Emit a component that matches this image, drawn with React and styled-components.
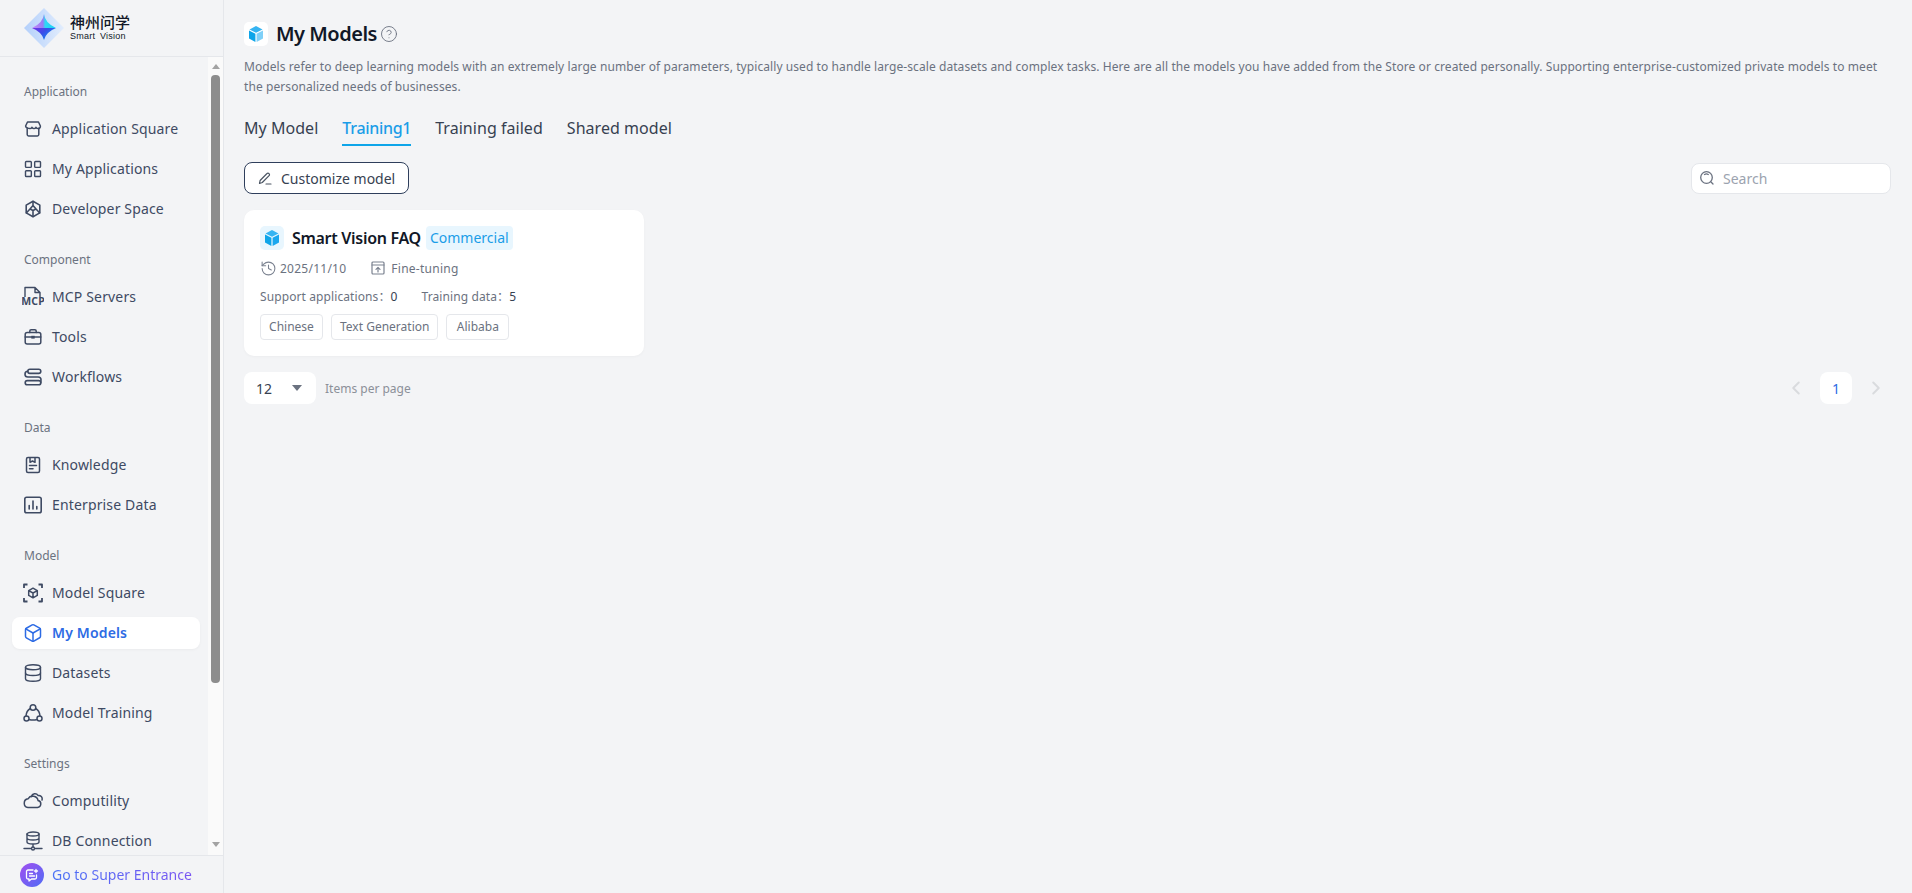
import styled, { createGlobalStyle } from "styled-components";
import { LayoutGrid, Box, Database, CircleHelp, ChevronLeft, ChevronRight, History } from "lucide-react";

const GlobalStyle = createGlobalStyle`
  html, body {
    margin: 0;
    height: 100%;
    background: #f3f4f6;
    font-family: "Noto Sans", "Noto Sans CJK SC", sans-serif;
    color: #374151;
    overflow: hidden;
  }
  * { box-sizing: border-box; }
`;

const Shell = styled.div`
  display: flex;
  height: 100vh;
`;
const Sidebar = styled.aside`
  width: 224px;
  flex: none;
  display: flex;
  flex-direction: column;
  border-right: 1px solid #e5e7eb;
`;
const LogoBar = styled.div`
  height: 57px;
  flex: none;
  display: flex;
  align-items: center;
  gap: 6px;
  padding-left: 24px;
  border-bottom: 1px solid #e5e7eb;
`;
const LogoText = styled.div`
  display: flex;
  flex-direction: column;
  color: #111827;
`;
const LogoCn = styled.span`
  font-size: 15px;
  line-height: 17px;
  font-weight: 500;
`;
const LogoEn = styled.span`
  font-size: 9px;
  line-height: 11px;
  font-family: "Liberation Sans", sans-serif;
  word-spacing: 2px;
  letter-spacing: 0.25px;
`;
const NavArea = styled.div`
  flex: 1;
  min-height: 0;
  display: flex;
`;
const NavScroll = styled.nav`
  flex: 1;
  min-width: 0;
  overflow: hidden;
  padding: 25px 8px 0 12px;
`;
const ScrollTrack = styled.div`
  width: 15px;
  flex: none;
  display: flex;
  flex-direction: column;
  align-items: center;
  padding: 7px 0 8px;
  background: #fafafa;
`;
const ScrollArrow = styled.span`
  width: 0;
  height: 0;
  border-left: 4.5px solid transparent;
  border-right: 4.5px solid transparent;
  ${(p) => (p.$down ? "border-top: 5px solid #a3a3a3; margin-top: auto;" : "border-bottom: 5px solid #a3a3a3;")}
`;
const ScrollThumb = styled.div`
  width: 9px;
  height: 608px;
  margin-top: 6px;
  border-radius: 4px;
  background: #8d8d8d;
`;
const NavGroup = styled.div`
  display: flex;
  flex-direction: column;
  gap: 8px;
  margin-bottom: 25px;
`;
const GroupLabel = styled.div`
  font-size: 12px;
  line-height: 20px;
  color: #6b7280;
  padding-left: 12px;
  margin-bottom: 3px;
`;
const NavItem = styled.div`
  height: 32px;
  display: flex;
  align-items: center;
  gap: 10px;
  padding: 0 0 2px 12px;
  border-radius: 8px;
  font-size: 14px;
  letter-spacing: 0.15px;
  font-weight: ${(p) => (p.$active ? 600 : 400)};
  color: ${(p) => (p.$active ? "#2d6be4" : "#3e4a63")};
  background: ${(p) => (p.$active ? "#fff" : "transparent")};
  box-shadow: ${(p) => (p.$active ? "0 1px 3px rgba(0,0,0,0.04)" : "none")};
`;
const NavIcon = styled.span`
  width: 18px;
  height: 18px;
  margin-top: 2px;
  flex: none;
  display: flex;
  align-items: center;
  justify-content: center;
  svg { flex: none; }
`;
const SuperEntrance = styled.div`
  height: 38px;
  flex: none;
  display: flex;
  align-items: center;
  gap: 8px;
  padding-left: 20px;
  border-top: 1px solid #e5e7eb;
`;
const SuperIcon = styled.span`
  width: 24px;
  height: 24px;
  border-radius: 50%;
  display: flex;
  align-items: center;
  justify-content: center;
  background: linear-gradient(135deg, #a24ff0, #4f6cf5);
`;
const SuperText = styled.span`
  font-size: 14px;
  background: linear-gradient(90deg, #4a72f5, #7a55f2);
  -webkit-background-clip: text;
  background-clip: text;
  color: transparent;
`;
const Main = styled.main`
  flex: 1;
  min-width: 0;
  padding: 22px 21px 0 20px;
`;
const TitleRow = styled.div`
  display: flex;
  align-items: center;
  height: 24px;
`;
const IconTile = styled.span`
  width: 24px;
  height: 24px;
  flex: none;
  border-radius: 5px;
  display: flex;
  align-items: center;
  justify-content: center;
  background: ${(p) => p.$bg};
`;
const PageTitle = styled.h1`
  margin: 0 3px 0 8px;
  font-size: 20px;
  line-height: 24px;
  font-weight: 600;
  letter-spacing: -0.5px;
  color: #111827;
`;
const Description = styled.p`
  margin: 11px 0 0;
  font-size: 12px;
  line-height: 20px;
  letter-spacing: 0.08px;
  color: #6b7280;
`;
const Tabs = styled.div`
  display: flex;
  gap: 24px;
  margin-top: 15px;
`;
const Tab = styled.div`
  height: 34px;
  font-size: 16px;
  line-height: 32px;
  font-weight: ${(p) => (p.$active ? 500 : 400)};
  letter-spacing: ${(p) => (p.$active ? "-0.3px" : "0.04px")};
  color: ${(p) => (p.$active ? "#1b9de8" : "#374151")};
  border-bottom: 2px solid ${(p) => (p.$active ? "#0ea5e9" : "transparent")};
`;
const Toolbar = styled.div`
  display: flex;
  align-items: center;
  justify-content: space-between;
  margin-top: 16px;
`;
const OutlineButton = styled.button`
  height: 32px;
  width: 165px;
  display: flex;
  align-items: center;
  gap: 9px;
  padding: 0 0 0 13px;
  background: #fff;
  border: 1px solid #2f3f5c;
  border-radius: 8px;
  font: inherit;
  font-size: 14px;
  color: #374151;
`;
const SearchBox = styled.div`
  width: 200px;
  height: 31px;
  display: flex;
  align-items: center;
  gap: 8px;
  padding-left: 7px;
  background: #fff;
  border: 1px solid #e5e7eb;
  border-radius: 8px;
  font-size: 14px;
  color: #9ca3af;
`;
const Card = styled.section`
  width: 400px;
  height: 146px;
  margin-top: 16px;
  padding: 16px;
  background: #fff;
  border-radius: 10px;
  box-shadow: 0 1px 3px rgba(0, 0, 0, 0.03);
`;
const CardHead = styled.div`
  display: flex;
  align-items: center;
  height: 24px;
`;
const CardTitle = styled.span`
  margin: 0 5px 0 8px;
  font-size: 16px;
  font-weight: 600;
  letter-spacing: -0.3px;
  color: #111827;
`;
const Badge = styled.span`
  height: 24px;
  padding: 0 4px;
  border-radius: 4px;
  background: #e8f6fe;
  color: #1b9de8;
  font-size: 14px;
  line-height: 24px;
`;
const MetaRow = styled.div`
  display: flex;
  align-items: center;
  margin-top: 8px;
  height: 20px;
  font-size: 12px;
  color: #6b7280;
`;
const MetaItem = styled.span`
  display: flex;
  align-items: center;
  gap: ${(p) => p.$gap}px;
  margin-right: 24px;
  letter-spacing: 0.25px;
`;
const StatsRow = styled.div`
  display: flex;
  gap: 24px;
  margin-top: 9px;
  height: 20px;
  font-size: 12px;
  line-height: 20px;
  letter-spacing: 0.1px;
  color: #6b7280;
`;
const StatValue = styled.span`
  color: #374151;
`;
const TagRow = styled.div`
  display: flex;
  gap: 8px;
  margin-top: 7px;
`;
const Tag = styled.span`
  height: 26px;
  min-width: 63px;
  padding: 0 8px;
  border: 1px solid #e5e7eb;
  border-radius: 4px;
  font-size: 12px;
  line-height: 24px;
  text-align: center;
  color: #6b7280;
`;
const Pagination = styled.div`
  display: flex;
  align-items: center;
  margin-top: 16px;
`;
const PageSize = styled.div`
  width: 72px;
  height: 32px;
  display: flex;
  align-items: center;
  justify-content: space-between;
  padding: 0 14px 0 12px;
  background: #fff;
  border-radius: 8px;
  font-size: 14px;
  color: #374151;
`;
const Caret = styled.span`
  width: 0;
  height: 0;
  border-left: 5px solid transparent;
  border-right: 5px solid transparent;
  border-top: 6px solid #6b7280;
`;
const PageSizeLabel = styled.span`
  margin-left: 9px;
  font-size: 12px;
  color: #8b9099;
`;
const Pager = styled.div`
  margin-left: auto;
  display: flex;
  align-items: center;
  gap: 13px;
  margin-right: 4px;
  color: #d9dbde;
`;
const PageNumber = styled.span`
  width: 32px;
  height: 32px;
  display: flex;
  align-items: center;
  justify-content: center;
  background: #fff;
  border-radius: 8px;
  font-size: 14px;
  color: #2d6be4;
`;

const Line = ({ size = 18, sw = 1.5, children }) => (
  <svg width={size} height={size} viewBox="0 0 18 18" fill="none" stroke="currentColor" strokeWidth={sw} strokeLinecap="round" strokeLinejoin="round">
    {children}
  </svg>
);

const StoreIcon = () => (
  <Line>
    <path d="M3.2 8.2v6.3c0 .8.6 1.4 1.4 1.4h8.8c.8 0 1.4-.6 1.4-1.4V8.2" />
    <path d="M3.5 2h11l1.9 4c.2 1.5-1 2.6-2.3 2.6-1 0-1.7-.5-2.1-1.4-.4.9-1.2 1.4-2 1.4s-1.6-.5-2-1.4c-.4.9-1.1 1.4-2.1 1.4C4.6 8.6 1.4 7.5 1.6 6z" />
  </Line>
);
const DevIcon = () => (
  <Line sw={1.6}>
    <path d="M9 1.2l6.8 3.9v7.8L9 16.8l-6.8-3.9V5.1z" />
    <path d="M9 5.5L12 9l-3 1.5L6 9zM9 10.5v6M6 9l-3.5 3.8M12 9l3.5 3.8M9 1.5v4" />
  </Line>
);
const McpIcon = () => (
  <svg width="22" height="24" viewBox="0 0 22 24" fill="none" stroke="currentColor" strokeWidth="1.4" strokeLinejoin="round">
    <path d="M3 12V2.5h10l5 5V12M13 2.5v5h5" />
    <text x="11" y="20" textAnchor="middle" fontSize="10.5" fontWeight="700" fill="currentColor" stroke="none" fontFamily="Noto Sans, sans-serif">MCP</text>
  </svg>
);
const ToolsIcon = () => (
  <Line>
    <rect x="1.2" y="4.5" width="15.6" height="11.5" rx="2" />
    <path d="M5.8 4.5V3c0-.8.6-1.3 1.3-1.3h3.8c.7 0 1.3.5 1.3 1.3v1.5M1.2 9h15.6" />
    <rect x="7.3" y="7.8" width="3.4" height="2.8" fill="currentColor" stroke="none" />
  </Line>
);
const WorkflowIcon = () => (
  <Line sw={1.6}>
    <rect x="3.8" y="1.2" width="13" height="4.2" rx="2.1" />
    <rect x="1.2" y="12.6" width="15.6" height="4.2" rx="2.1" />
    <path d="M3.8 3.3C1.4 3.3 1 5 1 6.2 1 8 2.4 9 3.8 9h10.4c1.4 0 2.8 1 2.8 2.8 0 1.2-.4 2.9-.2 2.9" />
  </Line>
);
const KnowledgeIcon = () => (
  <Line>
    <rect x="2.5" y="1.5" width="13" height="15" rx="1.5" />
    <path d="M6 1.8v4.5l2.5-1.3L11 6.3V1.8M5.5 9.5h7M5.5 12.8H9" />
  </Line>
);
const EnterpriseIcon = () => (
  <Line sw={1.6}>
    <rect x="0.8" y="1.3" width="16.4" height="15.4" rx="1.8" />
    <path d="M5.2 13V9.5M9 13V5M12.8 13v-2.500" />
  </Line>
);
const ModelSquareIcon = () => (
  <svg width="20" height="20" viewBox="0 0 20 20" fill="none" stroke="currentColor" strokeWidth="1.5" strokeLinejoin="round">
    <path d="M1 5V1.5h3.5M15.5 1.5H19V5M19 15v3.5h-3.5M4.5 18.5H1V15" strokeWidth="1.8" />
    <path d="M10 5.2l4.3 2.4v4.8L10 14.8l-4.3-2.400V7.600zM5.700 7.600l4.300 2.400 4.300-2.400M10 10v4.800" />
  </svg>
);
const TrainingIcon = () => (
  <svg width="20" height="20" viewBox="0 0 20 20" fill="none" stroke="currentColor" strokeWidth="1.5" strokeLinecap="round">
    <circle cx="10" cy="4.5" r="2.8" />
    <circle cx="3.5" cy="15.5" r="2.5" />
    <circle cx="16.5" cy="15.5" r="2.5" />
    <path d="M6 16.5c2.600.8 5.400.8 8 0M7.300 5.500C4.800 7 3.200 9.700 3 13M12.700 5.500c2.500 1.500 4.100 4.200 4.300 7.500" />
  </svg>
);
const CloudIcon = () => (
  <svg width="20" height="18" viewBox="0 0 20 18" fill="none" stroke="currentColor" strokeWidth="1.5" strokeLinecap="round" strokeLinejoin="round">
    <path d="M5 15.5h9.500a3.500 3.500 0 0 0 .6-6.900A5.500 5.500 0 0 0 5 6.800a4.400 4.400 0 0 0 0 8.700z" />
    <path d="M8.500 4.500a3.500 3.500 0 0 1 6.500-1 3.500 3.500 0 0 1 4 4.500" />
  </svg>
);
const ConnectionIcon = () => (
  <svg width="20" height="20" viewBox="0 0 20 20" fill="none" stroke="currentColor" strokeWidth="1.4" strokeLinecap="round" strokeLinejoin="round">
    <ellipse cx="10" cy="3" rx="6" ry="2" />
    <path d="M4 3v8c0 1.100 2.700 2 6 2s6-.9 6-2V3M4 7c0 1.100 2.700 2 6 2s6-.9 6-2M10 13v3M1 17.500h7M12 17.500h7" />
    <circle cx="10" cy="17.5" r="1.5" />
  </svg>
);
const LogoMark = () => (
  <svg width="40" height="40" viewBox="0 0 40 40">
    <defs>
      <linearGradient id="logoOuter" x1="0" y1="0.5" x2="1" y2="0.5">
        <stop offset="0" stopColor="#b4d0fb" />
        <stop offset="1" stopColor="#e2edfd" />
      </linearGradient>
      <linearGradient id="logoTop" x1="0" y1="0" x2="1" y2="0">
        <stop offset="0" stopColor="#c48cf8" />
        <stop offset="0.45" stopColor="#9a7cf5" />
        <stop offset="0.55" stopColor="#30d8f5" />
        <stop offset="1" stopColor="#1ad0f5" />
      </linearGradient>
      <linearGradient id="logoBottom" x1="0" y1="0" x2="1" y2="0.6">
        <stop offset="0" stopColor="#7430e8" />
        <stop offset="0.5" stopColor="#3a4ce8" />
        <stop offset="1" stopColor="#0a96f5" />
      </linearGradient>
    </defs>
    <path d="M20 0l20 20-20 20L0 20z" fill="url(#logoOuter)" />
    <path d="M20 6Q21 15 32 20H8Q19 15 20 6z" fill="url(#logoTop)" />
    <path d="M8 20h24Q22 24 20 32 18 24 8 20z" fill="url(#logoBottom)" />
  </svg>
);
const CubeSolid = ({ right = "#7fd0f8" }) => (
  <svg width="18" height="18" viewBox="0 0 18 18">
    <path d="M9 1l6.5 3.4L9 7.8 2.5 4.4z" fill="#35b4f2" />
    <path d="M2 5.4l6.4 3.4V17L2 13.6z" fill="#0ea5e9" />
    <path d="M16 5.4L9.6 8.8V17l6.4-3.4z" fill={right} />
  </svg>
);
const SearchGlyph = () => (
  <svg width="16" height="16" viewBox="0 0 16 16" fill="none" stroke="#6b7280" strokeWidth="1.3" strokeLinecap="round">
    <circle cx="7.5" cy="7.5" r="5.8" />
    <path d="M12 12l2 2M5.5 4.5c1.2-.8 2.6-.8 3.8 0" />
  </svg>
);
const PencilGlyph = () => (
  <svg width="14" height="14" viewBox="0 0 14 14" fill="none" stroke="#4b5563" strokeWidth="1.2" strokeLinecap="round" strokeLinejoin="round">
    <path d="M1.5 12.5l.6-3L9 2.5a1.3 1.3 0 0 1 1.900 0l.2.2a1.300 1.300 0 0 1 0 1.900L4.300 11.500zM8 13h5" />
  </svg>
);
const FineTuneGlyph = () => (
  <svg width="16" height="16" viewBox="0 0 16 16" fill="none" stroke="#7b8290" strokeWidth="1.2" strokeLinecap="round" strokeLinejoin="round">
    <rect x="2" y="2" width="12" height="12" rx="1" />
    <path d="M2 5h12M8 12V7.5M6 9.3l2-2 2 2" />
  </svg>
);
const ChatGlyph = () => (
  <svg width="14" height="14" viewBox="0 0 14 14" fill="none" stroke="#fff" strokeWidth="1.3" strokeLinecap="round" strokeLinejoin="round">
    <path d="M8 2H3a1.500 1.500 0 0 0-1.500 1.500v6A1.500 1.500 0 0 0 3 11h1v2l2.500-2H10a1.500 1.500 0 0 0 1.500-1.500V7" />
    <path d="M4.500 5.500h3M4.500 8h5M11 1.500v3M9.500 3h3" />
  </svg>
);

const navGroups = [
  {
    label: "Application",
    items: [
      { name: "Application Square", icon: <StoreIcon /> },
      { name: "My Applications", icon: <LayoutGrid size={20} strokeWidth={1.7} /> },
      { name: "Developer Space", icon: <DevIcon /> },
    ],
  },
  {
    label: "Component",
    items: [
      { name: "MCP Servers", icon: <McpIcon /> },
      { name: "Tools", icon: <ToolsIcon /> },
      { name: "Workflows", icon: <WorkflowIcon /> },
    ],
  },
  {
    label: "Data",
    items: [
      { name: "Knowledge", icon: <KnowledgeIcon /> },
      { name: "Enterprise Data", icon: <EnterpriseIcon /> },
    ],
  },
  {
    label: "Model",
    items: [
      { name: "Model Square", icon: <ModelSquareIcon /> },
      { name: "My Models", icon: <Box size={20} strokeWidth={1.8} />, active: true },
      { name: "Datasets", icon: <Database size={20} strokeWidth={1.7} /> },
      { name: "Model Training", icon: <TrainingIcon /> },
    ],
  },
  {
    label: "Settings",
    items: [
      { name: "Computility", icon: <CloudIcon /> },
      { name: "DB Connection", icon: <ConnectionIcon /> },
    ],
  },
];

export default function App() {
  return (
    <Shell>
      <GlobalStyle />
      <Sidebar>
        <LogoBar>
          <LogoMark />
          <LogoText>
            <LogoCn>神州问学</LogoCn>
            <LogoEn>Smart Vision</LogoEn>
          </LogoText>
        </LogoBar>
        <NavArea>
          <NavScroll>
            {navGroups.map((group) => (
              <NavGroup key={group.label}>
                <GroupLabel>{group.label}</GroupLabel>
                {group.items.map((item) => (
                  <NavItem key={item.name} $active={item.active}>
                    <NavIcon>{item.icon}</NavIcon>
                    {item.name}
                  </NavItem>
                ))}
              </NavGroup>
            ))}
          </NavScroll>
          <ScrollTrack>
            <ScrollArrow />
            <ScrollThumb />
            <ScrollArrow $down />
          </ScrollTrack>
        </NavArea>
        <SuperEntrance>
          <SuperIcon>
            <ChatGlyph />
          </SuperIcon>
          <SuperText>Go to Super Entrance</SuperText>
        </SuperEntrance>
      </Sidebar>
      <Main>
        <TitleRow>
          <IconTile $bg="#fff">
            <CubeSolid />
          </IconTile>
          <PageTitle>My Models</PageTitle>
          <CircleHelp size={18} strokeWidth={1.2} color="#6b7280" />
        </TitleRow>
        <Description>
          Models refer to deep learning models with an extremely large number of parameters, typically used to handle large-scale datasets and complex tasks. Here are all the models you have added from the Store or created personally. Supporting enterprise-customized private models to meet the personalized needs of businesses.
        </Description>
        <Tabs>
          <Tab>My Model</Tab>
          <Tab $active>Training1</Tab>
          <Tab>Training failed</Tab>
          <Tab>Shared model</Tab>
        </Tabs>
        <Toolbar>
          <OutlineButton>
            <PencilGlyph />
            Customize model
          </OutlineButton>
          <SearchBox>
            <SearchGlyph />
            Search
          </SearchBox>
        </Toolbar>
        <Card>
          <CardHead>
            <IconTile $bg="#e8f6fe">
              <CubeSolid right="#1aa7ee" />
            </IconTile>
            <CardTitle>Smart Vision FAQ</CardTitle>
            <Badge>Commercial</Badge>
          </CardHead>
          <MetaRow>
            <MetaItem $gap={3}>
              <History size={17} strokeWidth={1.5} color="#7b8290" />
              2025/11/10
            </MetaItem>
            <MetaItem $gap={5}>
              <FineTuneGlyph />
              Fine-tuning
            </MetaItem>
          </MetaRow>
          <StatsRow>
            <span>Support applications：<StatValue>0</StatValue></span>
            <span>Training data：<StatValue>5</StatValue></span>
          </StatsRow>
          <TagRow>
            <Tag>Chinese</Tag>
            <Tag>Text Generation</Tag>
            <Tag>Alibaba</Tag>
          </TagRow>
        </Card>
        <Pagination>
          <PageSize>
            12
            <Caret />
          </PageSize>
          <PageSizeLabel>Items per page</PageSizeLabel>
          <Pager>
            <ChevronLeft size={22} strokeWidth={2.2} />
            <PageNumber>1</PageNumber>
            <ChevronRight size={22} strokeWidth={2.2} />
          </Pager>
        </Pagination>
      </Main>
    </Shell>
  );
}
